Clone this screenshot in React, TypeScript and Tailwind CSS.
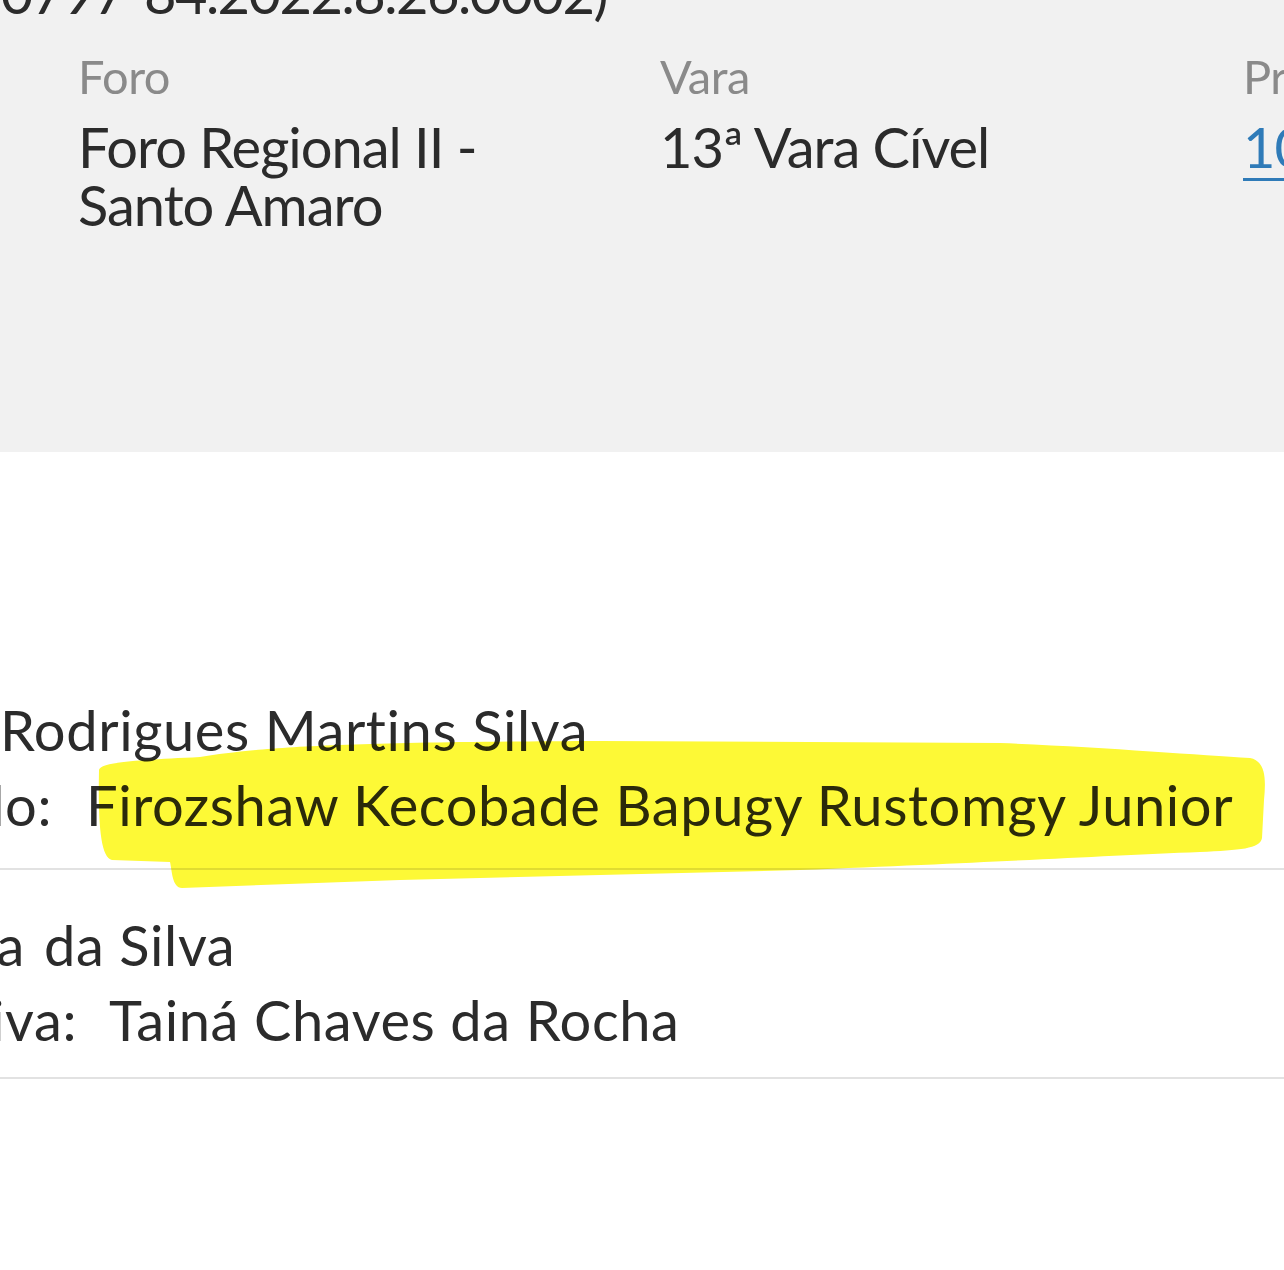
import React from 'react'

function Clip({ width, children }: { width: string; children: React.ReactNode }) {
  // right-aligned label whose start is cut off by the left edge
  return <span className={`flex shrink-0 justify-end overflow-hidden whitespace-nowrap ${width}`}>{children}</span>
}

function Field({ label, children }: { label: string; children: React.ReactNode }) {
  return (
    <div className="flex flex-col">
      <span className="text-[47px] leading-[56px] text-[#8a8a8a] tracking-[-0.5px]">{label}</span>
      <div className="mt-[14px] text-[56px] leading-[58px] text-[#2b2b2b] tracking-[-1px]">{children}</div>
    </div>
  )
}

export default function App() {
  return (
    <div className="relative w-[1284px] h-[1270px] overflow-hidden bg-white font-['Lato',sans-serif] [font-variant-ligatures:none]">
      <section className="h-[452px] bg-[#f1f1f1] overflow-hidden">
        <div className="-mt-[37px] flex h-[60px]">
          <Clip width="w-[607px]">
            <span className="text-[56px] leading-[60px] text-[#2b2b2b] tracking-[-1.5px]">
              Processo nº 1000797-84.2022.8.26.0002)
            </span>
          </Clip>
        </div>

        <div className="mt-[25px] grid grid-cols-[582px_583px_1fr] pl-[78px]">
          <Field label="Foro">
            Foro Regional II -<br />
            Santo Amaro
          </Field>
          <Field label="Vara">13ª Vara Cível</Field>
          <Field label="Processo principal">
            <span className="whitespace-nowrap text-[#2f7bb8] underline decoration-[3px] underline-offset-[10px]">
              1000797-84.2022.8.26.0002
            </span>
          </Field>
        </div>
      </section>

      <section className="pt-[240px] text-[56px] leading-[75px] text-[#2b2b2b] tracking-[0.6px]">
        <div className="pb-[26px]">
          <div className="flex whitespace-nowrap">Rodrigues Martins Silva</div>
          <div className="flex whitespace-nowrap">
            <Clip width="w-[52px]">Advogado:</Clip>
            <span className="ml-[34px]">Firozshaw Kecobade Bapugy Rustomgy Junior</span>
          </div>
        </div>
        <div className="h-[2px] bg-[#e2e2e2]" />

        <div className="pt-[37px] pb-[20px]">
          <div className="flex whitespace-nowrap">
            <Clip width="w-[25px]">Pereira</Clip>
            <span className="ml-[19px]">da Silva</span>
          </div>
          <div className="flex whitespace-nowrap">
            <Clip width="w-[77px]">Advogada Ativa:</Clip>
            <span className="ml-[32px]">Tainá Chaves da Rocha</span>
          </div>
        </div>
        <div className="h-[2px] bg-[#e2e2e2]" />
      </section>

      {/* highlighter marker over the lawyer name */}
      <svg
        className="pointer-events-none absolute left-0 top-0 mix-blend-multiply"
        width="1284"
        height="1270"
        viewBox="0 0 1284 1270"
      >
        <path
          d="M99,770 C100,762 140,760 200,757 C260,748 320,742 600,741 L1000,743 C1100,747 1200,755 1250,758 C1266,761 1266,780 1264,800 L1262,838 C1260,849 1240,850 1200,852 C1100,856 1000,862 800,870 L400,880 L182,888 C172,888 172,870 170,862 L112,860 C100,858 98,820 99,770 Z"
          fill="#fdf936"
        />
      </svg>
    </div>
  )
}
